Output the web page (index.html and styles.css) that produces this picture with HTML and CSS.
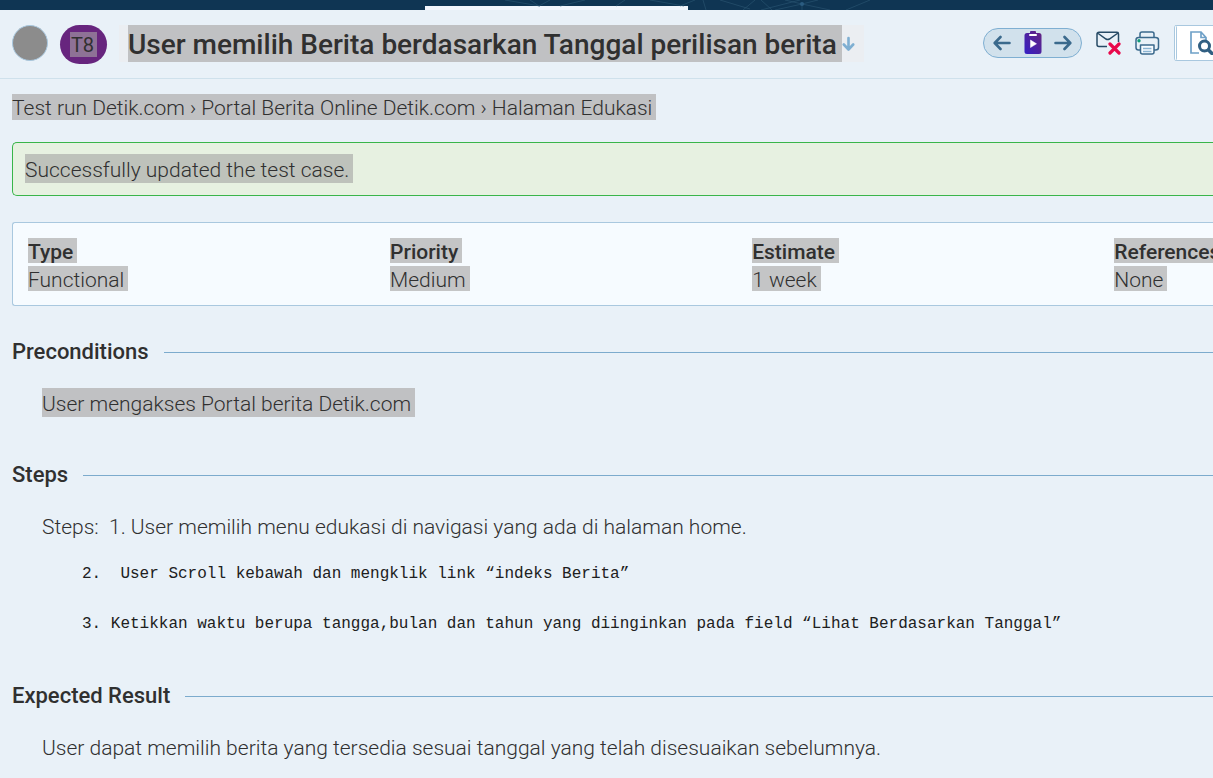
FILE: index.html
```html
<!DOCTYPE html>
<html lang="id">
<head>
<meta charset="utf-8">
<title>T8 User memilih Berita berdasarkan Tanggal perilisan berita</title>
<link rel="stylesheet" href="styles.css">
</head>
<body>
<div class="topbar">
  <div class="tab"></div>
  <svg class="mesh" width="560" height="10" viewBox="0 0 560 10" fill="none" stroke="#28536f" aria-hidden="true">
    <path d="M5 0 40 6M30 0 39 6 50 0M85 0 60 6M125 0 116 6M150 0 184 6M195 0 180 6M203 0 206 10M220 0 250 9M255 0 243 10M300 0 261 10M261 0 272 10M302 4 275 10M302 4 285 0M302 4 318 0M302 4V10M302 4 330 10M370 0 346 10" opacity=".7"/>
    <circle cx="302" cy="4" r="2" fill="#2b5c81" stroke="none"/>
  </svg>
</div>
<header class="header">
  <span class="status"></span>
  <span class="badge"><span class="badge-text">T8</span></span>
  <h1 class="title"><span class="title-text">User memilih Berita berdasarkan Tanggal perilisan berita</span><svg width="13" height="16" viewBox="0 0 13 16" fill="none" stroke="#7fafd2" stroke-width="2.6" stroke-linecap="round" stroke-linejoin="round" aria-hidden="true"><path d="M6.500 2V13M1.800 8.500l4.700 5 4.700-5"/></svg></h1>
  <div class="tools">
    <nav class="pager" aria-label="Tests">
      <button class="icon-button" aria-label="Previous"><svg width="18" height="16" viewBox="0 0 18 16" fill="none" stroke="#3b6a8d" stroke-width="2.600" stroke-linecap="round" stroke-linejoin="round"><path d="M16.500 8H2M7.500 2 1.700 8l5.800 6"/></svg></button>
      <button class="icon-button" aria-label="Test run"><svg width="18" height="24" viewBox="0 0 18 24"><defs><linearGradient id="run" x1="1" y1="0" x2="0" y2="1"><stop offset="0" stop-color="#65247f"/><stop offset="1" stop-color="#3520c5"/></linearGradient></defs><path d="M3 2h3V1q0-1 1-1h4q1 0 1 1v1h3q2.500 0 2.500 2.500v16q0 2.500-2.500 2.500H3Q.5 23 .5 20.500v-16Q.5 2 3 2z" fill="url(#run)"/><path d="M6 4h6" stroke="#fff" stroke-width="2" stroke-linecap="round"/><path d="M6.500 9v7.500l6-3.700z" fill="#fff" stroke="#fff" stroke-linejoin="round" stroke-width=".5"/></svg></button>
      <button class="icon-button" aria-label="Next"><svg width="18" height="16" viewBox="0 0 18 16" fill="none" stroke="#3b6a8d" stroke-width="2.600" stroke-linecap="round" stroke-linejoin="round"><path d="M1.500 8H16M10.500 2l5.800 6-5.800 6"/></svg></button>
    </nav>
    <button class="icon-button" aria-label="Unsubscribe"><svg width="25" height="24" viewBox="0 0 25 24" fill="none"><path d="M11 15.500H3Q1 15.500 1 13.500V3Q1 1.300 3 1.300h18Q22.500 1.300 22.500 3v8M1.500 2l8.500 6q1.700 1 3.400 0L22 2" stroke="#274b66" stroke-width="1.500"/><path d="m14 13 9 9m0-9-9 9" stroke="#e8084b" stroke-width="3.200" stroke-linecap="round"/></svg></button>
    <button class="icon-button" aria-label="Print"><svg width="25" height="24" viewBox="0 0 25 24" fill="none" stroke="#3b6a8d" stroke-width="1.500" stroke-linejoin="round"><path d="M5 6.500V3q0-2 2-2h10q2 0 2 2v3.500M5 19H3.500Q1 19 1 16.500V9q0-2.500 2.500-2.500h17Q23.500 6.500 23.500 9v7.500q0 2.500-3 2.500H19"/><path d="M5.500 14h13.500v7q0 2-2 2h-9.500q-2 0-2-2z" fill="#f6fbff"/><path d="M8 17.500h8.500M8 20.500h8.500" stroke="#8bb4d2"/><circle cx="4" cy="9.800" r="1.700" fill="#109b78" stroke="none"/></svg></button>
    <button class="report" aria-label="View report"><svg width="24" height="24" viewBox="0 0 24 24" fill="none"><path d="M9 22H1V1h10l5 5.500V9M11 1v5.500h5" stroke="#6fa1c8" stroke-width="1.700"/><circle cx="14.500" cy="15" r="5" stroke="#315f82" stroke-width="3"/><path d="m18.500 19 4 4" stroke="#315f82" stroke-width="3.500" stroke-linecap="round"/></svg></button>
  </div>
</header>
<main class="content">
  <div class="crumbs"><span class="mark">Test run Detik.com › Portal Berita Online Detik.com › Halaman Edukasi</span></div>
  <div class="alert" role="status"><span class="mark mark-tall">Successfully updated the test case.</span></div>
  <dl class="facts">
    <div class="fact"><dt><span class="mark">Type</span></dt><dd><span class="mark">Functional</span></dd></div>
    <div class="fact"><dt><span class="mark">Priority</span></dt><dd><span class="mark">Medium</span></dd></div>
    <div class="fact"><dt><span class="mark">Estimate</span></dt><dd><span class="mark">1 week</span></dd></div>
    <div class="fact"><dt><span class="mark">References</span></dt><dd><span class="mark">None</span></dd></div>
  </dl>
  <section class="section">
    <h2 class="heading">Preconditions</h2>
    <p class="text"><span class="mark mark-tall">User mengakses Portal berita Detik.com</span></p>
  </section>
  <section class="section">
    <h2 class="heading">Steps</h2>
    <p class="text">Steps:&nbsp; 1. User memilih menu edukasi di navigasi yang ada di halaman home.</p>
    <pre class="steps">2.  User Scroll kebawah dan mengklik link “indeks Berita”

3. Ketikkan waktu berupa tangga,bulan dan tahun yang diinginkan pada field “Lihat Berdasarkan Tanggal”</pre>
  </section>
  <section class="section">
    <h2 class="heading">Expected Result</h2>
    <p class="text">User dapat memilih berita yang tersedia sesuai tanggal yang telah disesuaikan sebelumnya.</p>
  </section>
</main>
</body>
</html>
```

FILE: styles.css
```css
* { box-sizing: border-box; }
body {
  margin: 0;
  background: #e9f1f8;
  color: #303030;
  font: 300 21px/28px Roboto, "Liberation Sans", sans-serif;
  overflow-x: hidden;
}
svg { display: block; flex: none; }
.topbar {
  position: relative;
  height: 10px;
  padding-top: 6px;
  background: #0f3553;
}
.tab {
  width: 263px;
  height: 4px;
  margin-left: 35%;
  background: #f1f6fd;
}
.mesh { position: absolute; top: 0; left: 500px; }
.header {
  display: flex;
  align-items: flex-start;
  height: 69px;
  padding: 15px 0 0 12px;
  border-bottom: 1px solid #cfe1ec;
}
.status {
  flex: none;
  width: 36px;
  height: 36px;
  margin-right: 12px;
  border: 1px solid #a9c8df;
  border-radius: 50%;
  background: #8c8c8c;
}
.badge {
  flex: none;
  display: flex;
  align-items: center;
  justify-content: center;
  width: 47px;
  height: 39px;
  margin-right: 12px;
  border-radius: 20px;
  background: #67257e;
}
.badge-text {
  padding: 2px 3px 0 1px;
  background: #8e7296;
  font-size: 20px;
  font-weight: 400;
  line-height: 23px;
}
.title {
  display: flex;
  align-items: center;
  margin: 0;
  padding: 0 9px;
  background: #ebeef2;
  font-size: 28px;
  font-weight: 500;
  line-height: 34px;
  white-space: nowrap;
}
.title-text {
  padding: 3px 5px 0 0;
  background: #c0c1c3;
}
.tools {
  display: flex;
  align-items: center;
  gap: 14px;
  height: 36px;
  margin-left: auto;
}
.pager {
  display: flex;
  align-items: center;
  justify-content: space-between;
  width: 99px;
  height: 30px;
  padding: 0 9px;
  border: 1px solid #7fafd2;
  border-radius: 15px;
  background: #d1e1ec;
}
.icon-button {
  padding: 0;
  border: 0;
  background: none;
}
.report {
  width: 39px;
  height: 36px;
  padding: 0 0 0 13px;
  border: 1px solid #a9c8df;
  border-left: 3px double #a9c8df;
  border-right: 0;
  border-radius: 3px 0 0 3px;
  background: #fff;
}
.content { padding: 15px 0 0 12px; }
.mark {
  display: inline-block;
  padding: 3px 4px 0 0;
  background: #c0c1c3;
  line-height: 23px;
  vertical-align: top;
}
.mark-tall { line-height: 26px; }
.crumbs { height: 26px; }
.alert {
  height: 54px;
  margin-top: 22px;
  padding: 11px 12px;
  border: 1px solid #3ab54a;
  border-right: 0;
  border-radius: 5px 0 0 5px;
  background: #e7f1e1;
}
.alert .mark { background: #bec2bb; }
.facts {
  display: grid;
  grid-template-columns: repeat(3, minmax(0, 11fr)) minmax(0, 3fr);
  margin: 26px 0 0;
  padding: 15px 0 11px 15px;
  border: 1px solid #a9c8df;
  border-right: 0;
  border-radius: 3px 0 0 3px;
  background: #f6fbff;
}
.facts .mark { background: #c4c5c6; line-height: 22px; }
.fact { overflow: hidden; white-space: nowrap; }
dt, dd { margin: 0; height: 28px; }
dt { font-weight: 500; }
.section { margin-top: 32px; }
.section + .section { margin-top: 41px; }
.heading {
  display: flex;
  align-items: center;
  gap: 15px;
  margin: 0;
  font-size: 22px;
  font-weight: 500;
  line-height: 28px;
}
.heading::after {
  content: "";
  flex: 1;
  height: 1px;
  background: #7cabcd;
}
.text {
  margin: 22px 0 0;
  padding-left: 30px;
  line-height: 32px;
}
.steps {
  margin: 19px 0 0;
  padding: 0 0 4px 70px;
  color: #202020;
  font: 400 16px/25px "Liberation Mono", monospace;
}
```
